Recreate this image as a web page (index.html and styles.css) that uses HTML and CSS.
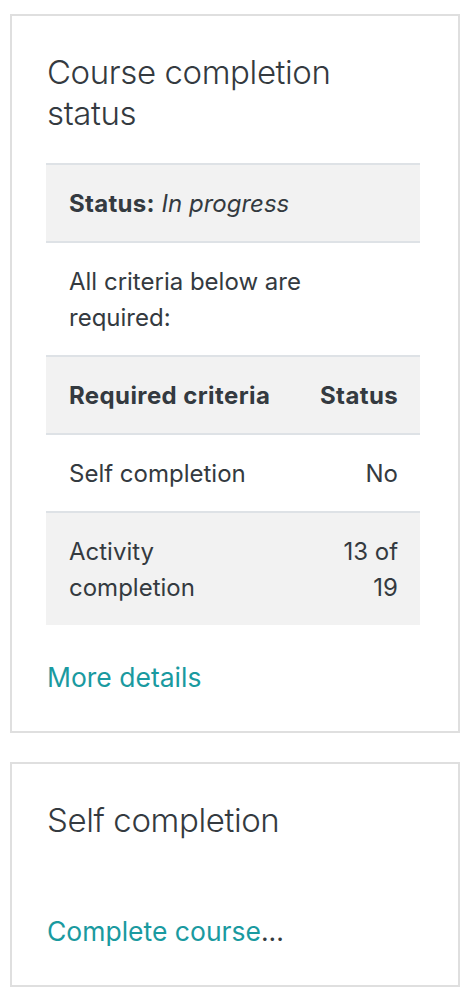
FILE: index.html
```html
<!DOCTYPE html>
<html>
<head>
<meta charset="utf-8">
<link rel="stylesheet" href="styles.css">
</head>
<body>
<div class="blocks">
  <section class="card">
    <h5 class="card-title">Course completion status</h5>
    <table class="ctable">
      <colgroup>
        <col class="col1">
        <col class="col2">
      </colgroup>
      <tr class="striped">
        <td colspan="2"><b>Status:</b> <i>In progress</i></td>
      </tr>
      <tr>
        <td colspan="2">All criteria below are required:</td>
      </tr>
      <tr class="striped head">
        <td>Required criteria</td>
        <td class="c2">Status</td>
      </tr>
      <tr>
        <td>Self completion</td>
        <td class="c2">No</td>
      </tr>
      <tr class="striped">
        <td>Activity completion</td>
        <td class="c2">13 of 19</td>
      </tr>
    </table>
    <p class="more"><a href="#">More details</a></p>
  </section>
  <section class="card">
    <h5 class="card-title">Self completion</h5>
    <p class="more self"><a href="#">Complete course</a>...</p>
  </section>
</div>
</body>
</html>
```
FILE: styles.css
```css
html, body {
  margin: 0;
  padding: 0;
  background: #fff;
}
body {
  font-family: Inter, "Noto Sans", sans-serif;
  font-size: 24px;
  line-height: 36px;
  color: #343a40;
}
.blocks {
  padding: 14px 16px 0 10px;
  display: flex;
  flex-direction: column;
  gap: 29px;
}
.card {
  border: 2px solid #dfdfdf;
  padding: 36px 38px 36px 34px;
}
.card-title {
  margin: 0 0 29px 1px;
  font-size: 33px;
  line-height: 41px;
  font-weight: 300;
  letter-spacing: -0.4px;
  color: #343a40;
}
.ctable {
  width: 374px;
  border-collapse: collapse;
  table-layout: fixed;
}
.ctable .col1 { width: 251px; }
.ctable .col2 { width: 123px; }
.ctable td {
  border-top: 2px solid #dee2e6;
  padding: 21px 22px 19px 23px;
  vertical-align: top;
}
.ctable .c2 { text-align: right; }
.ctable b { letter-spacing: 0.3px; }
.striped td { background: #f2f2f2; }
.head td { font-weight: 700; letter-spacing: 0.4px; }
.more {
  margin: 34px 0 0 1px;
  font-size: 26.5px;
}
.more a {
  color: #1a9aa0;
  text-decoration: none;
}
.self {
  margin-top: 72px;
}
```
